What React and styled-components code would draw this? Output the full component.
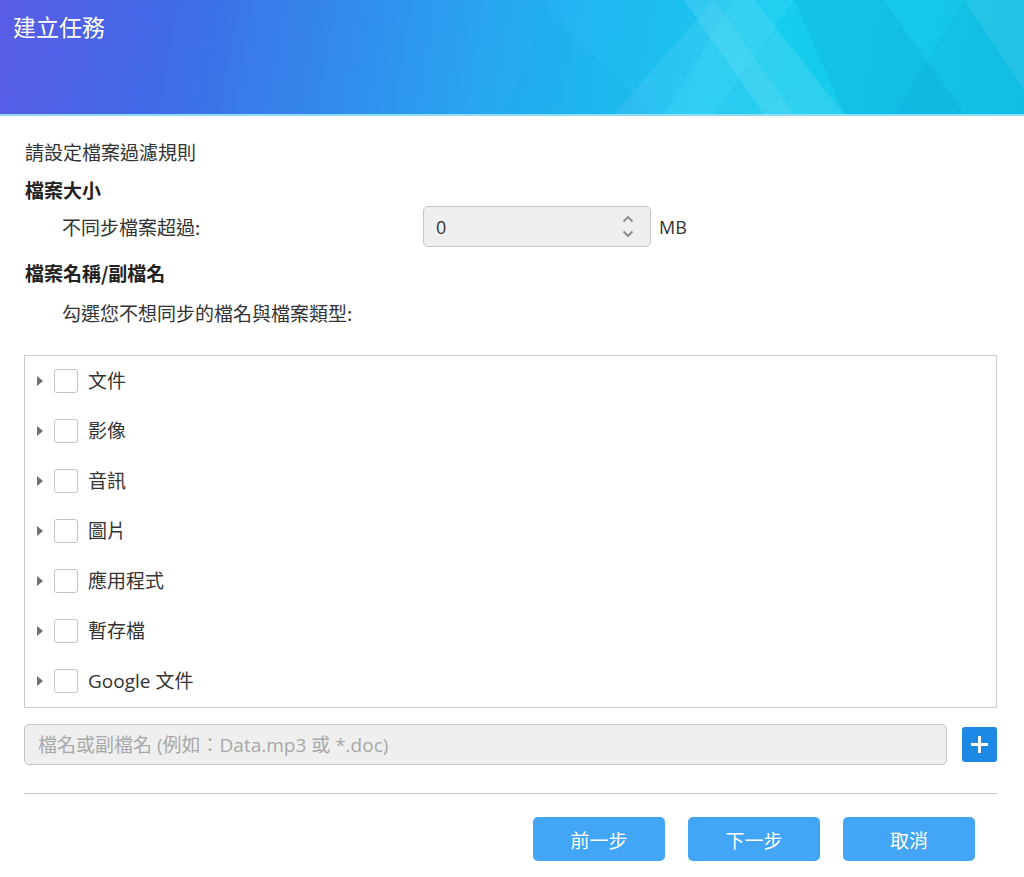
import { useState } from "react";
import styled, { createGlobalStyle } from "styled-components";

const GlobalStyle = createGlobalStyle`
    html, body {
        margin: 0;
        padding: 0;
        background: #ffffff;
        font-family: "Noto Sans CJK TC", "Noto Sans", "Open Sans", sans-serif;
        color: #333333;
    }
    * {
        box-sizing: border-box;
    }
`;

const Page = styled.div`
    width: 1024px;
    height: 877px;
    background: #ffffff;
    overflow: hidden;
`;

const Header = styled.div`
    position: relative;
    height: 116px;
    background: linear-gradient(100deg, #5a5ce6 0%, #4069e6 16%, #2f93ee 38%, #22b6f2 56%, #16cdee 76%, #14c2e6 100%);
    border-bottom: 2px solid #8edcf6;
    overflow: hidden;
`;

const HeaderArt = styled.svg`
    position: absolute;
    top: 0;
    right: 0;
    width: 560px;
    height: 114px;
`;

const Title = styled.h1`
    position: relative;
    margin: 0;
    padding: 9px 0 0 13px;
    font-size: 23px;
    line-height: 34px;
    font-weight: 400;
    color: #ffffff;
`;

const Body = styled.div`
    padding: 24px 27px 0 24px;
`;

const Intro = styled.div`
    font-size: 19px;
    line-height: 24px;
    padding-left: 1px;
`;

const Section = styled.div`
    font-size: 19px;
    font-weight: 700;
    line-height: 24px;
    margin-top: 14px;
    padding-left: 1px;
    color: #222;
`;

const SizeRow = styled.div`
    display: flex;
    align-items: center;
    margin-top: 4px;
    height: 41px;
`;

const SizeLabel = styled.div`
    width: 399px;
    padding-left: 38px;
    font-size: 19px;
`;

const NumberBox = styled.div`
    display: flex;
    align-items: center;
    width: 228px;
    height: 41px;
    background: #efefef;
    border: 1px solid #c6c6c6;
    border-radius: 5px;
    padding: 0 16px 0 12px;
    font-family: "Open Sans", "Noto Sans", sans-serif;
    font-size: 18px;
`;

const NumberValue = styled.span`
    flex: 1;
`;

const Spinner = styled.div`
    display: flex;
    flex-direction: column;
    gap: 7px;
`;

const Unit = styled.span`
    margin-left: 8px;
    font-family: "Open Sans", "Noto Sans", sans-serif;
    font-size: 18px;
`;

const Hint = styled.div`
    font-size: 19px;
    line-height: 24px;
    margin-top: 16px;
    padding-left: 38px;
`;

const TreeBox = styled.div`
    margin-top: 30px;
    border: 1px solid #cccccc;
    padding: 0 0 1px;
`;

const TreeRow = styled.div`
    display: flex;
    align-items: center;
    height: 50px;
    padding-left: 12px;
    font-size: 19px;
`;

const Caret = styled.span`
    width: 0;
    height: 0;
    border-top: 5px solid transparent;
    border-bottom: 5px solid transparent;
    border-left: 6px solid #707070;
    margin-right: 11px;
`;

const Check = styled.span`
    width: 24px;
    height: 24px;
    border: 1px solid #c4c4c4;
    border-radius: 3px;
    background: #fff;
    margin-right: 10px;
`;

const RowText = styled.span`
    font-family: "Open Sans", "Noto Sans CJK TC", sans-serif;
    margin-top: -3px;
`;

const AddRow = styled.div`
    display: flex;
    align-items: center;
    margin-top: 16px;
    gap: 15px;
`;

const NameInput = styled.input`
    flex: 1;
    height: 41px;
    background: #efefef;
    border: 1px solid #c6c6c6;
    border-radius: 5px;
    padding: 0 13px;
    font-family: "Open Sans", "Noto Sans CJK TC", sans-serif;
    font-size: 19px;
    color: #333;
    outline: none;
    &::placeholder {
        color: #a8a8a8;
    }
`;

const PlusButton = styled.button`
    width: 35px;
    height: 35px;
    border: none;
    border-radius: 3px;
    background: #1e88e5;
    display: flex;
    align-items: center;
    justify-content: center;
    padding: 0;
`;

const Divider = styled.hr`
    margin: 28px 0 0;
    border: none;
    border-top: 1px solid #c8c8c8;
`;

const Footer = styled.div`
    display: flex;
    justify-content: flex-end;
    gap: 23px;
    padding: 23px 22px 0 0;
`;

const FooterButton = styled.button`
    width: 132px;
    height: 44px;
    border: none;
    border-radius: 5px;
    background: #42a5f5;
    color: #ffffff;
    font-family: "Noto Sans CJK TC", sans-serif;
    font-size: 19px;
`;

const fileTypes = ["文件", "影像", "音訊", "圖片", "應用程式", "暫存檔", "Google 文件"];

function App() {
    const [name, setName] = useState("");

    return (
        <Page>
            <GlobalStyle />
            <Header>
                <HeaderArt viewBox="0 0 560 114" preserveAspectRatio="none">
                    <polygon points="40,114 80,8 190,114" fill="#0a9ed8" opacity="0.10" />
                    <polygon points="150,114 250,0 330,114" fill="#ffffff" opacity="0.07" />
                    <polygon points="220,0 290,0 380,114 300,114" fill="#ffffff" opacity="0.10" />
                    <polygon points="270,0 330,0 250,114 200,114" fill="#55e6ff" opacity="0.18" />
                    <polygon points="330,0 420,0 500,114 380,114" fill="#0590c4" opacity="0.16" />
                    <polygon points="430,114 500,0 560,0 560,114" fill="#0a9ccc" opacity="0.12" />
                    <polygon points="500,0 560,0 560,90" fill="#ffffff" opacity="0.07" />
                </HeaderArt>
                <Title>建立任務</Title>
            </Header>
            <Body>
                <Intro>請設定檔案過濾規則</Intro>
                <Section>檔案大小</Section>
                <SizeRow>
                    <SizeLabel>不同步檔案超過:</SizeLabel>
                    <NumberBox>
                        <NumberValue>0</NumberValue>
                        <Spinner>
                            <svg width="12" height="8" viewBox="0 0 12 8">
                                <path d="M1.5 6.5 L6 2 L10.5 6.5" fill="none" stroke="#8a8a8a" strokeWidth="1.8" />
                            </svg>
                            <svg width="12" height="8" viewBox="0 0 12 8">
                                <path d="M1.5 1.5 L6 6 L10.5 1.5" fill="none" stroke="#8a8a8a" strokeWidth="1.8" />
                            </svg>
                        </Spinner>
                    </NumberBox>
                    <Unit>MB</Unit>
                </SizeRow>
                <Section>檔案名稱/副檔名</Section>
                <Hint>勾選您不想同步的檔名與檔案類型:</Hint>
                <TreeBox>
                    {fileTypes.map((t) => (
                        <TreeRow key={t}>
                            <Caret />
                            <Check />
                            <RowText>{t}</RowText>
                        </TreeRow>
                    ))}
                </TreeBox>
                <AddRow>
                    <NameInput
                        placeholder="檔名或副檔名 (例如：Data.mp3 或 *.doc)"
                        value={name}
                        onChange={(e) => setName(e.target.value)}
                    />
                    <PlusButton type="button">
                        <svg width="21" height="21" viewBox="0 0 21 21">
                            <path d="M10.5 2 V19 M2 10.5 H19" stroke="#ffffff" strokeWidth="3" />
                        </svg>
                    </PlusButton>
                </AddRow>
                <Divider />
                <Footer>
                    <FooterButton type="button">前一步</FooterButton>
                    <FooterButton type="button">下一步</FooterButton>
                    <FooterButton type="button">取消</FooterButton>
                </Footer>
            </Body>
        </Page>
    );
}

export default App;
